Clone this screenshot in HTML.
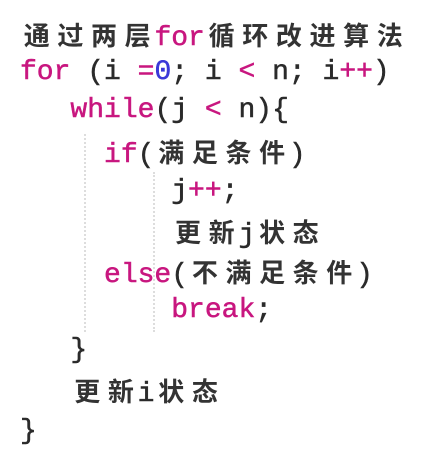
<!DOCTYPE html>
<html><head><meta charset="utf-8"><style>
html,body{margin:0;padding:0;background:#fff;width:438px;height:459px;overflow:hidden;position:relative}
.l{position:absolute;left:20px;height:40px;line-height:40px;font-family:"Liberation Mono",monospace;font-size:28px;color:#2a2a2a;white-space:pre;-webkit-text-stroke:0.5px currentColor}
.c{margin:0 3.8px;font-family:"Noto Sans CJK SC",sans-serif;font-size:26px;font-weight:bold;color:#333;-webkit-text-stroke:0}
.k{color:#c8167f}
.n{color:#3b38d8}
.g{position:absolute;border-left:2px dotted #ddd;width:0}
</style></head><body>
<div class="g" style="left:84px;top:134px;height:198px"></div>
<div class="g" style="left:153px;top:172px;height:160px"></div>
<div class="l" style="top:15px"><span class="c">通</span><span class="c">过</span><span class="c">两</span><span class="c">层</span><span class="k">for</span><span class="c">循</span><span class="c">环</span><span class="c">改</span><span class="c">进</span><span class="c">算</span><span class="c">法</span></div>
<div class="l" style="top:53px"><span class="k">for</span> (i <span class="k">=</span><span class="n">0</span>; i <span class="k">&lt;</span> n; i<span class="k">++</span>)</div>
<div class="l" style="top:91px">   <span class="k">while</span>(j <span class="k">&lt;</span> n){</div>
<div class="l" style="top:132px">     <span class="k">if</span>(<span class="c">满</span><span class="c">足</span><span class="c">条</span><span class="c">件</span>)</div>
<div class="l" style="top:172px">         j<span class="k">++</span>;</div>
<div class="l" style="top:212px">         <span class="c">更</span><span class="c">新</span>j<span class="c">状</span><span class="c">态</span></div>
<div class="l" style="top:252px">     <span class="k">else</span>(<span class="c">不</span><span class="c">满</span><span class="c">足</span><span class="c">条</span><span class="c">件</span>)</div>
<div class="l" style="top:291px">         <span class="k">break</span>;</div>
<div class="l" style="top:331px">   }</div>
<div class="l" style="top:371px">   <span class="c">更</span><span class="c">新</span>i<span class="c">状</span><span class="c">态</span></div>
<div class="l" style="top:412px">}</div>
</body></html>
